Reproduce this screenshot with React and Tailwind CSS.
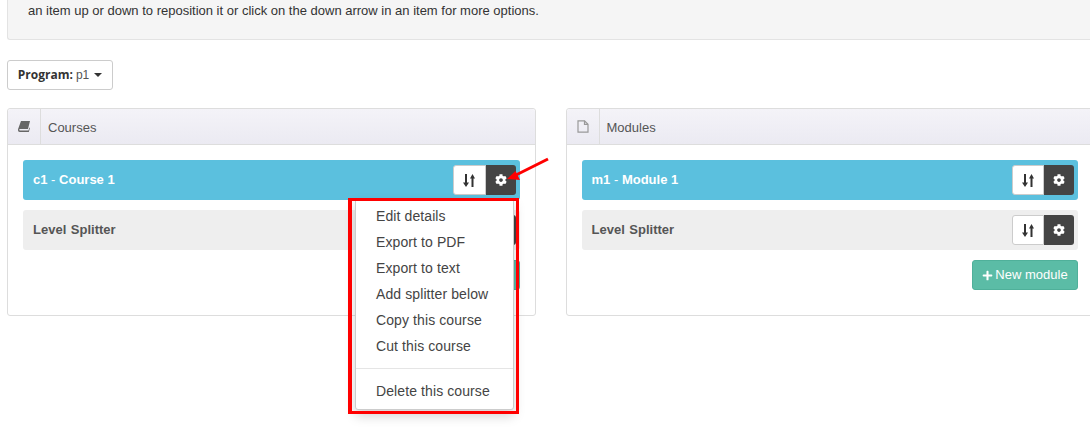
import React from "react";
import { FaCog, FaPlus } from "react-icons/fa";

function ItemButtons() {
  return (
    <div className="flex h-[30px]">
      <div className="flex w-[32.5px] items-center justify-center rounded-l-[3px] border border-[#ccc] bg-white">
        <svg width="12" height="13" viewBox="0 0 12 13" fill="#333">
          <path d="M2 0 H4 V8.5 H6 L3 13 L0 8.5 H2 Z" />
          <path d="M8.5 13 H10.5 V4.5 H12 L9.5 0 L7 4.5 H8.5 Z" />
        </svg>
      </div>
      <div className="flex w-[30px] items-center justify-center rounded-r-[3px] bg-[#444] text-white">
        <FaCog className="text-[12px]" />
      </div>
    </div>
  );
}

function BookIcon() {
  return (
    <svg width="12" height="11" viewBox="0 0 12 11" fill="#666">
      <path d="M3 0 H12 L10 8 H2 C1.5 8 1.2 8.3 1.2 8.8 C1.2 9.3 1.5 9.6 2 9.6 H10.5 L11.4 6.5 L12 7 L10.8 11 H1.8 C0.6 11 0 10 0 9 C0 8.5 0.1 8 0.3 7.5 Z" />
    </svg>
  );
}

function FileIcon() {
  return (
    <svg width="12" height="13" viewBox="0 0 12 13" fill="none" stroke="#999" strokeWidth="1.2">
      <path d="M1 0.8 H7.5 L11 4.3 V12.2 H1 Z" />
      <path d="M7.5 0.8 V4.3 H11" />
    </svg>
  );
}

function Panel({ icon, title, code, name, newLabel }) {
  return (
    <div className="h-[208px] w-[528.5px] shrink-0 rounded-[3px] border border-[#ddd] bg-white">
      <div className="flex h-[36px] rounded-t-[3px] border-b border-[#ddd] bg-gradient-to-b from-[#f4f3f8] to-[#ebeaf2]">
        <div className="flex w-[33px] items-center justify-center border-r border-[#ddd]">
          {icon}
        </div>
        <div className="pl-[7px] text-[13px] leading-[38px] text-[#555]">{title}</div>
      </div>
      <div className="px-[15px] pt-[15px]">
        <div className="flex h-10 items-center justify-between rounded-[3px] bg-[#5bc0de] pl-[10px] pr-[4px]">
          <div className="text-[13px] font-bold text-white">
            {code} <span className="font-normal">-</span> {name}
          </div>
          <ItemButtons />
        </div>
        <div className="mt-[10px] flex h-10 items-center justify-between rounded-[3px] bg-[#eee] pl-[10px] pr-[4px]">
          <div className="text-[13px] font-bold text-[#555] [word-spacing:1px]">Level Splitter</div>
          <ItemButtons />
        </div>
        <div className="mt-[10px] flex justify-end">
          <div className="flex h-[30px] w-[106px] items-center justify-center gap-[2px] rounded-[3px] border border-[#4fb09a] bg-[#5bbca6] text-[13px] text-white">
            <FaPlus className="text-[11px]" />
            {newLabel}
          </div>
        </div>
      </div>
    </div>
  );
}

function CourseMenu() {
  const items = ["Edit details", "Export to PDF", "Export to text", "Add splitter below", "Copy this course", "Cut this course"];
  return (
    <div className="absolute left-[355px] top-[198px] h-[212px] w-[159px] rounded-b-[3px] border border-[#ccc] bg-white text-[14px] tracking-[0.1px] text-[#444] shadow-[0_6px_12px_rgba(0,0,0,0.175)]">
      <div className="pt-[4px]">
        {items.map((item) => (
          <div key={item} className="h-[26px] pl-[20px] leading-[26px]">
            {item}
          </div>
        ))}
      </div>
      <div className="mt-[9px] border-t border-[#e5e5e5] pt-[9px]">
        <div className="h-[26px] pl-[20px] leading-[26px]">Delete this course</div>
      </div>
    </div>
  );
}

export default function App() {
  return (
    <div className="relative h-[444px] w-[1090px] overflow-hidden bg-white font-['Liberation_Sans',sans-serif]">
      <div className="ml-[7px] h-[40px] w-[1100px] rounded-b-[3px] border-b border-l border-[#e3e3e3] bg-[#f5f5f5] pl-[20px] pt-[2px] text-[13px] leading-[17px] text-[#333]">
        an item up or down to reposition it or click on the down arrow in an item for more options.
      </div>

      <div className="ml-[7px] mt-[20px] flex h-[30px] w-[106px] items-center justify-center gap-[3px] rounded-[3px] border border-[#ccc] bg-white text-[12px] text-[#555]">
        <span className="font-['Open_Sans',sans-serif] font-bold text-[#333]">Program:</span> p1
        <span className="ml-[2px] h-0 w-0 border-x-[4px] border-t-[4px] border-x-transparent border-t-[#333]" />
      </div>

      <div className="ml-[7px] mt-[18px] flex gap-[30px]">
        <Panel icon={<BookIcon />} title="Courses" code="c1" name="Course 1" newLabel="New course" />
        <Panel icon={<FileIcon />} title="Modules" code="m1" name="Module 1" newLabel="New module" />
      </div>

      <CourseMenu />

      <div className="absolute left-[348px] top-[198px] h-[216px] w-[171px] border-[3px] border-l-4 border-[#ff0000]" />

      <svg className="absolute left-[500px] top-[150px]" width="55" height="40" viewBox="0 0 55 40">
        <path d="M48 9 L16 25" stroke="#ff0000" strokeWidth="3" />
        <path d="M7 29 L15.5 21 L20 30 Z" fill="#ff0000" />
      </svg>
    </div>
  );
}
